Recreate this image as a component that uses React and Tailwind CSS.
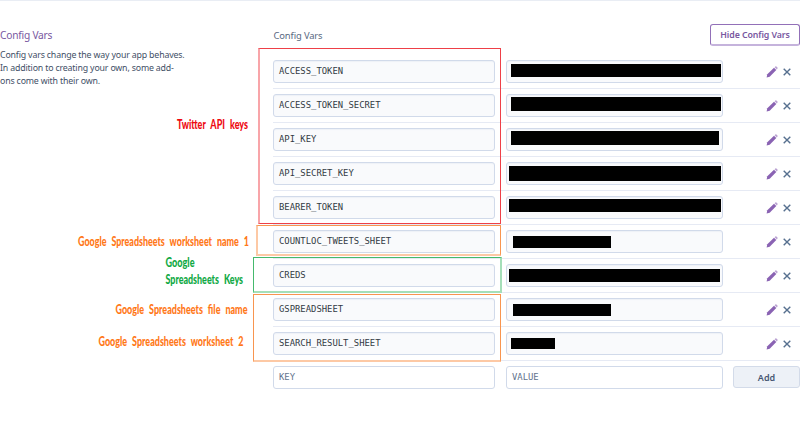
const rows = [
  { key: "ACCESS_TOKEN", mask: "ml-[4px] mt-[3px] w-[210px] h-[13px]" },
  { key: "ACCESS_TOKEN_SECRET", mask: "ml-[4px] mt-[2px] w-[210px] h-[14px]" },
  { key: "API_KEY", mask: "ml-[4px] mt-[2px] w-[208px] h-[14px]" },
  { key: "API_SECRET_KEY", mask: "ml-[2px] mt-[3px] w-[212px] h-[15px]" },
  { key: "BEARER_TOKEN", mask: "ml-[2px] mt-[2px] w-[212px] h-[13px]" },
  { key: "COUNTLOC_TWEETS_SHEET", mask: "ml-[6px] mt-[5px] w-[98px] h-[12px]" },
  { key: "CREDS", mask: "ml-[2px] mt-[4px] w-[211px] h-[13px]" },
  { key: "GSPREADSHEET", mask: "ml-[6px] mt-[5px] w-[98px] h-[12px]" },
  { key: "SEARCH_RESULT_SHEET", mask: "ml-[4px] mt-[5px] w-[44px] h-[11px]" },
];

const notes = [
  { text: "Twitter API keys", x: 177, y: 129.4, w: 71, fill: "#ee0a12" },
  { text: "Google Spreadsheets worksheet name 1", x: 78, y: 246, w: 171, fill: "#ff7818" },
  { text: "Google", x: 165.5, y: 266.8, w: 29, fill: "#10a944" },
  { text: "Spreadsheets Keys", x: 165.5, y: 283.5, w: 77.5, fill: "#10a944" },
  { text: "Google Spreadsheets file name", x: 115.5, y: 313.5, w: 132, fill: "#ff7818" },
  { text: "Google Spreadsheets worksheet 2", x: 98.5, y: 345.5, w: 145, fill: "#ff7818" },
];

// Horizontal squeeze that gives the annotations their condensed look.
const squeeze = 0.66;

const field = "h-[23px] shrink-0 rounded-[3px] border border-[#d1daea]";
const mono = "font-['DejaVu_Sans_Mono',monospace] text-[8.9px] leading-[21px]";

function Pencil() {
  return (
    <svg className="h-[12px] w-[12px]" viewBox="0 0 12 12" fill="#8a63b3">
      <path d="M0.6 11.4 1.3 8.3 8 1.7 10.3 4 3.7 10.7Z" />
      <path d="M8.6 1.2 9.3 .6Q10 .1 10.7.7L11.3 1.3Q11.9 2 11.4 2.7L10.8 3.4Z" opacity=".6" />
    </svg>
  );
}

function Cross() {
  return (
    <svg className="h-[8px] w-[8px]" viewBox="0 0 8 8" stroke="#57708f" strokeWidth="1.4">
      <path d="M.7.7 7.3 7.3M7.3.7.7 7.3" />
    </svg>
  );
}

function Row({ name, mask }) {
  return (
    <div className="flex h-[34px] border-b border-[#e6eaf4] pt-[5px]">
      <div className={`${field} ${mono} w-[222px] bg-[#f9fafc] pl-[5px] text-[#333a44] shadow-[inset_0_1px_1px_#eef1f7]`}>{name}</div>
      <div className={`${field} ml-[11px] w-[217px] bg-[#f9fafc] shadow-[inset_0_1px_1px_#eef1f7]`}>
        <div className={`bg-black ${mask}`} />
      </div>
      <div className="flex h-[24px] flex-1 items-center gap-[5px] pl-[43px]">
        <Pencil />
        <Cross />
      </div>
    </div>
  );
}

export default function App() {
  return (
    <div className="relative h-[434px] w-[800px] overflow-hidden border-t border-[#e9edf4] bg-white font-['Noto_Sans',sans-serif]">
      <div className="flex">
        <aside className="w-[273px] shrink-0 pt-[26px] text-[#3f4f66]">
          <h2 className="text-[10.2px] leading-[16px] tracking-[-0.22px] text-[#79589f]">Config Vars</h2>
          <p className="mt-[6px] w-[195px] text-[8.8px] leading-[13px] tracking-[-0.17px] whitespace-nowrap">
            Config vars change the way your app behaves.
            <br />
            In addition to creating your own, some add-
            <br />
            ons come with their own.
          </p>
        </aside>
        <main className="w-[527px]">
          <header className="flex h-[54px] justify-between pt-[23px]">
            <h3 className="mt-[4px] ml-[0.5px] text-[9.4px] leading-[16px] tracking-[-0.12px] text-[#596981]">Config Vars</h3>
            <button className="h-[22px] w-[90px] rounded-[3px] border border-b-2 border-[#9270b8] border-b-[#c5b3dc] text-[8.8px] leading-[18px] font-semibold tracking-[-0.1px] whitespace-nowrap text-[#79589f]">
              Hide Config Vars
            </button>
          </header>
          {rows.map((r) => (
            <Row key={r.key} name={r.key} mask={r.mask} />
          ))}
          <div className="flex pt-[5px]">
            <div className={`${field} ${mono} w-[222px] pl-[5px] text-[#62738d]`}>KEY</div>
            <div className={`${field} ${mono} ml-[11px] w-[217px] pl-[5px] text-[#62738d]`}>VALUE</div>
            <button className="ml-[10px] h-[22px] w-[67px] rounded-[3px] border border-[#d3dbe9] bg-[#edf1f7] text-[9px] leading-[19px] font-semibold text-[#475672]">
              Add
            </button>
          </div>
        </main>
      </div>

      <div className="absolute top-[47px] left-[258px] h-[176px] w-[243px] border border-l-2 border-[#ee4048] border-l-[#f8a5a9]" />
      <div className="absolute top-[224px] left-[256px] h-[31px] w-[245px] border border-b-2 border-l-2 border-[#f8954f] border-b-[#fdc9a5] border-l-[#fdc9a5]" />
      <div className="absolute top-[256px] left-[253px] h-[36px] w-[249px] border border-r-2 border-b-2 border-[#45b96d] border-r-[#a5dfb9] border-b-[#a5dfb9]" />
      <div className="absolute top-[293px] left-[253px] h-[68px] w-[248px] border border-b-2 border-[#f8954f] border-b-[#fdc9a5]" />

      <svg className="absolute -top-px left-0 h-[434px] w-[260px]" viewBox="0 0 260 434">
        {notes.map((n) => (
          <text
            key={n.text}
            transform={`translate(${n.x} ${n.y}) scale(${squeeze} 1)`}
            fill={n.fill}
            textLength={n.w / squeeze}
            lengthAdjust="spacingAndGlyphs"
            className="font-[Lato,sans-serif] text-[12.5px] font-black [word-spacing:4px]"
          >
            {n.text}
          </text>
        ))}
      </svg>
    </div>
  );
}
